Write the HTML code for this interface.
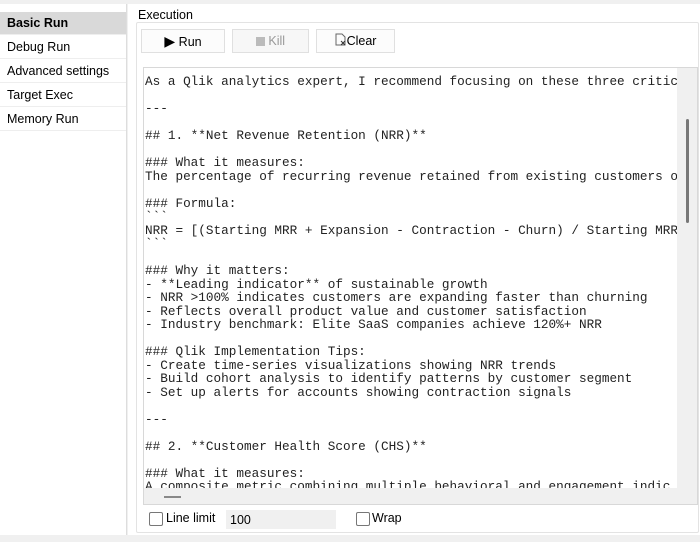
<!DOCTYPE html>
<html><head><style>
body{margin:0;width:700px;height:542px;background:#f0f0f0;position:relative;overflow:hidden;font-family:"Segoe UI","Liberation Sans",sans-serif;font-size:12.5px;color:#000}
.abs{position:absolute}
#side{left:0;top:4px;width:126px;height:531px;background:#fff;border-right:1px solid #ddd}
.it{position:absolute;left:0;width:126px;height:23px;line-height:23px;padding-left:7px;box-sizing:border-box;border-bottom:1px solid #eee}
#main{left:128px;top:4px;width:572px;height:531px;background:#fff}
.grp{left:136px;top:22px;width:561px;height:509px;border:1px solid #e3e3e3;border-radius:2px}
.btn{top:29px;height:24px;border:1px solid #e0e0e0;background:#fcfcfc;box-sizing:border-box;text-align:center;line-height:22px}
#ta{left:143px;top:67px;width:555px;height:438px;border:1px solid #d8d8d8;box-sizing:border-box;background:#fff;overflow:hidden}
pre{margin:0;position:absolute;left:1px;top:7px;font-family:"Liberation Mono",monospace;font-size:12.7px;line-height:13.5px;color:#222}
.cb{width:12px;height:12px;border:1px solid #777;border-radius:2px;background:#fff}
</style></head><body>
<div class="abs" style="left:0;top:0;width:700px;height:4px;background:#f0f0f0"></div>
<div id="side" class="abs">
<div class="it" style="top:8px;background:#d9d9d9;font-weight:bold">Basic Run</div>
<div class="it" style="top:32px">Debug Run</div>
<div class="it" style="top:56px">Advanced settings</div>
<div class="it" style="top:80px">Target Exec</div>
<div class="it" style="top:104px">Memory Run</div>
</div>
<div id="main" class="abs"></div>
<div class="abs grp"></div>
<div class="abs" style="left:137px;top:8px;background:#fff;padding:0 1px">Execution</div>
<div class="abs btn" style="left:141px;width:84px"><span style="font-size:14px">&#9654;</span> Run</div>
<div class="abs btn" style="left:232px;width:77px;color:#999;background:#f7f7f7"><span style="display:inline-block;width:9px;height:9px;background:#bbb;vertical-align:-1px"></span> Kill</div>
<div class="abs btn" style="left:316px;width:79px"><svg width="12" height="14" style="vertical-align:-2px" viewBox="0 0 12 14"><path d="M1 1h6l3 3v8H1z" fill="none" stroke="#666"/><path d="M6 8l4 4M10 8l-4 4" stroke="#333"/></svg>Clear</div>
<div id="ta" class="abs">
<pre>As a Qlik analytics expert, I recommend focusing on these three critic

---

## 1. **Net Revenue Retention (NRR)**

### What it measures:
The percentage of recurring revenue retained from existing customers o

### Formula:
&#96;&#96;&#96;
NRR = [(Starting MRR + Expansion - Contraction - Churn) / Starting MRR
&#96;&#96;&#96;

### Why it matters:
- **Leading indicator** of sustainable growth
- NRR &gt;100% indicates customers are expanding faster than churning
- Reflects overall product value and customer satisfaction
- Industry benchmark: Elite SaaS companies achieve 120%+ NRR

### Qlik Implementation Tips:
- Create time-series visualizations showing NRR trends
- Build cohort analysis to identify patterns by customer segment
- Set up alerts for accounts showing contraction signals

---

## 2. **Customer Health Score (CHS)**

### What it measures:
A composite metric combining multiple behavioral and engagement indic</pre>
<div class="abs" style="left:533px;top:0;width:21px;height:437px;background:#f0f0f0"></div>
<div class="abs" style="left:542px;top:51px;width:3px;height:104px;background:#777;border-radius:2px"></div>
<div class="abs" style="left:0;top:420px;width:554px;height:18px;background:#f0f0f0"></div>
<div class="abs" style="left:20px;top:428px;width:17px;height:2px;background:#888"></div>
</div>
<div class="abs cb" style="left:149px;top:512px"></div>
<div class="abs" style="left:166px;top:511px">Line limit</div>
<div class="abs" style="left:226px;top:510px;width:110px;height:19px;background:#f0f0f0;line-height:20px;padding-left:4px;box-sizing:border-box">100</div>
<div class="abs cb" style="left:356px;top:512px"></div>
<div class="abs" style="left:372px;top:511px">Wrap</div>
</body></html>
